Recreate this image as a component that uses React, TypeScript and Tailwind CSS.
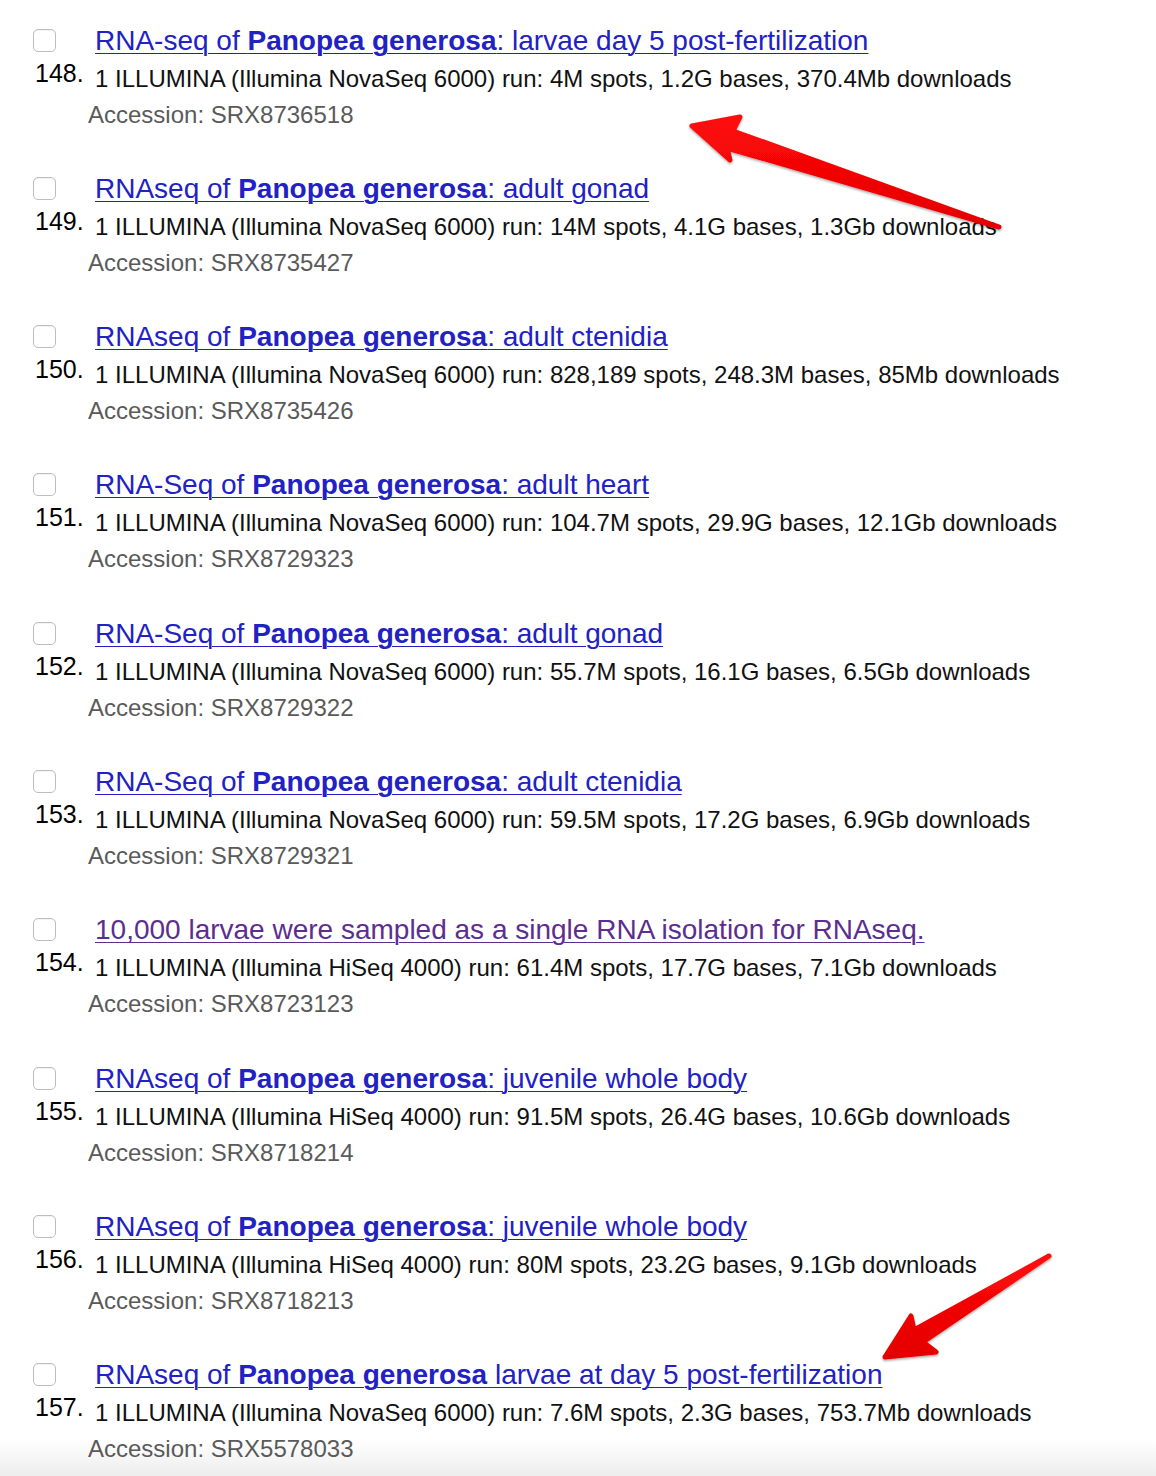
import type { ReactNode } from "react";

type Entry = {
    num: number;
    prefix: string;
    suffix: string;
    plain?: string;
    platform: string;
    stats: string;
    accession: string;
};

const entries: Entry[] = [
    { num: 148, prefix: "RNA-seq of ", suffix: ": larvae day 5 post-fertilization", platform: "NovaSeq 6000", stats: "4M spots, 1.2G bases, 370.4Mb downloads", accession: "SRX8736518" },
    { num: 149, prefix: "RNAseq of ", suffix: ": adult gonad", platform: "NovaSeq 6000", stats: "14M spots, 4.1G bases, 1.3Gb downloads", accession: "SRX8735427" },
    { num: 150, prefix: "RNAseq of ", suffix: ": adult ctenidia", platform: "NovaSeq 6000", stats: "828,189 spots, 248.3M bases, 85Mb downloads", accession: "SRX8735426" },
    { num: 151, prefix: "RNA-Seq of ", suffix: ": adult heart", platform: "NovaSeq 6000", stats: "104.7M spots, 29.9G bases, 12.1Gb downloads", accession: "SRX8729323" },
    { num: 152, prefix: "RNA-Seq of ", suffix: ": adult gonad", platform: "NovaSeq 6000", stats: "55.7M spots, 16.1G bases, 6.5Gb downloads", accession: "SRX8729322" },
    { num: 153, prefix: "RNA-Seq of ", suffix: ": adult ctenidia", platform: "NovaSeq 6000", stats: "59.5M spots, 17.2G bases, 6.9Gb downloads", accession: "SRX8729321" },
    { num: 154, prefix: "", suffix: "", plain: "10,000 larvae were sampled as a single RNA isolation for RNAseq.", platform: "HiSeq 4000", stats: "61.4M spots, 17.7G bases, 7.1Gb downloads", accession: "SRX8723123" },
    { num: 155, prefix: "RNAseq of ", suffix: ": juvenile whole body", platform: "HiSeq 4000", stats: "91.5M spots, 26.4G bases, 10.6Gb downloads", accession: "SRX8718214" },
    { num: 156, prefix: "RNAseq of ", suffix: ": juvenile whole body", platform: "HiSeq 4000", stats: "80M spots, 23.2G bases, 9.1Gb downloads", accession: "SRX8718213" },
    { num: 157, prefix: "RNAseq of ", suffix: " larvae at day 5 post-fertilization", platform: "NovaSeq 6000", stats: "7.6M spots, 2.3G bases, 753.7Mb downloads", accession: "SRX5578033" },
];

const Title = ({ entry }: { entry: Entry }): ReactNode => {
    if (entry.plain) {
        return (
            <a href="#" className="text-[#5d2d90] underline underline-offset-[3px] decoration-1">
                {entry.plain}
            </a>
        );
    }
    return (
        <a href="#" className="text-[#2121c4] underline underline-offset-[3px] decoration-1">
            {entry.prefix}
            <b className="font-bold">Panopea generosa</b>
            {entry.suffix}
        </a>
    );
};

const Row = ({ entry }: { entry: Entry }) => (
    <div className="mb-[44.33px]">
        <div className="flex items-start h-[32px]">
            <div className="w-[62px] shrink-0 pt-[4px]">
                <span className="block w-[23px] h-[23px] rounded-[5px] border border-[#bdbdbd] bg-white shadow-[inset_0_1px_1px_rgba(0,0,0,0.05)]"></span>
            </div>
            <div className="text-[28px] leading-[32px] whitespace-nowrap">
                <Title entry={entry} />
            </div>
        </div>
        <div className="flex items-start mt-[8px]">
            <div className="w-[62px] shrink-0 pl-[2px] text-[25px] leading-[17px] text-black">{entry.num}.</div>
            <div className="text-[24px] leading-[28px] text-[#111] whitespace-nowrap">
                1 ILLUMINA (Illumina {entry.platform}) run: {entry.stats}
            </div>
        </div>
        <div className="mt-[8px] pl-[55px] text-[24px] leading-[28px] text-[#5a5a5a]">
            Accession: {entry.accession}
        </div>
    </div>
);

const Arrows = () => (
    <svg className="absolute inset-0 pointer-events-none" width="1156" height="1476" viewBox="0 0 1156 1476">
        <defs>
            <filter id="shade" x="-10%" y="-10%" width="120%" height="130%">
                <feDropShadow dx="0" dy="1.5" stdDeviation="0.8" floodColor="#000" floodOpacity="0.35" />
            </filter>
            <linearGradient id="redA" x1="0" y1="0" x2="0" y2="1">
                <stop offset="0" stopColor="#ff0a0a" />
                <stop offset="1" stopColor="#e40000" />
            </linearGradient>
        </defs>
        <polygon
            points="692,126 740,117 733,131 999,227 727,148 730,160"
            fill="url(#redA)"
            stroke="url(#redA)"
            strokeWidth="5"
            strokeLinejoin="round"
            filter="url(#shade)"
        />
        <polygon
            points="885,1357 911,1316 914,1330 1049,1256 923,1342 936,1352"
            fill="url(#redA)"
            stroke="url(#redA)"
            strokeWidth="5"
            strokeLinejoin="round"
            filter="url(#shade)"
        />
    </svg>
);

const App = () => {
    return (
        <div
            className="relative w-[1156px] h-[1476px] overflow-hidden bg-[linear-gradient(to_bottom,#ffffff_1440px,#ededed_1476px)]"
            style={{ fontFamily: '"Liberation Sans", Arial, Helvetica, sans-serif' }}
        >
            <div className="pt-[24.5px] pl-[33px]">
                {entries.map((entry) => (
                    <Row key={entry.num} entry={entry} />
                ))}
            </div>
            <Arrows />
        </div>
    );
};

export default App;
